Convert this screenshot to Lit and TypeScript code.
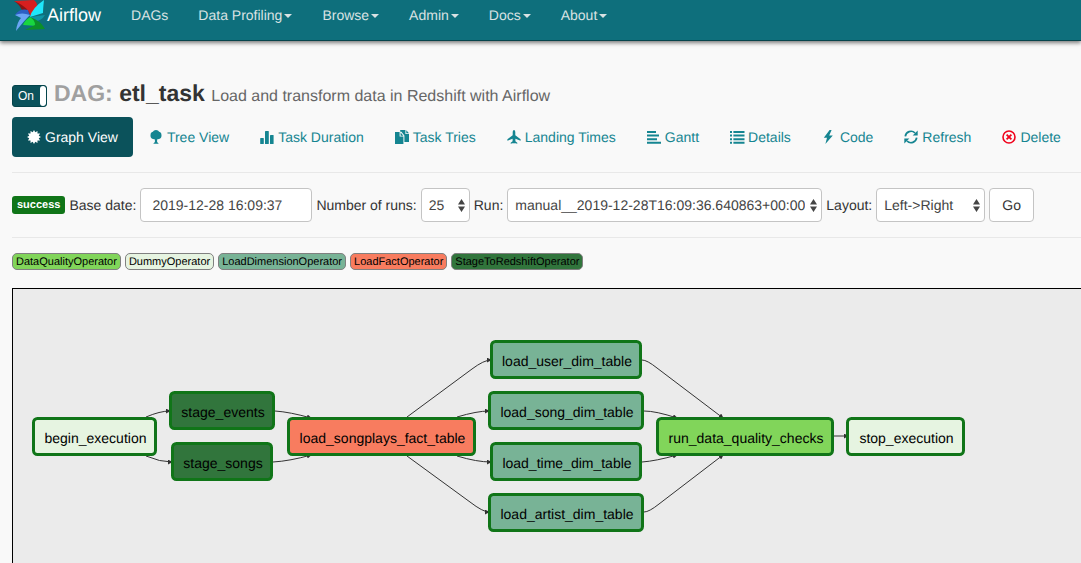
import { LitElement, html, svg, css } from "lit";
import { customElement } from "lit/decorators.js";

const star = (() => {
  const pts: string[] = [];
  for (let i = 0; i < 24; i++) {
    const r = i % 2 ? 4.9 : 7;
    const a = (i * Math.PI) / 12;
    pts.push(`${(7 + r * Math.sin(a)).toFixed(2)},${(7 - r * Math.cos(a)).toFixed(2)}`);
  }
  return pts.join(" ");
})();

const icons: Record<string, unknown> = {
  certificate: svg`<polygon points=${star}/>`,
  tree: svg`<path d="M7 0 C8.4 0 9.6 0.7 10 1.8 C11.4 2 12.5 3.1 12.4 4.5 C13 6.7 11.8 8.6 10 8.9 C9 9.1 8.4 9.3 8.1 9.4 V12 L9.8 13.8 H4.2 L5.9 12 V9.4 C5.6 9.3 5 9.1 4 8.9 C2.2 8.6 1 6.7 1.6 4.5 C1.5 3.1 2.6 2 4 1.8 C4.4 0.7 5.6 0 7 0Z"/>`,
  stats: svg`<rect x="0.2" y="8" width="3.6" height="6" rx="0.6"/><rect x="5" y="1" width="3.8" height="13" rx="0.6"/><rect x="10" y="5" width="3.6" height="9" rx="0.6"/>`,
  duplicate: svg`<path d="M0 2 H4.6 V6.6 H8.4 V14 H0Z M5.6 2.6 L8.4 5.8 H5.6Z"/><path d="M5.2 0 H10.4 V4 H14 V12 H9.4 V5.6 L6.4 1.8 H5.2Z M11.3 0.3 L14 3.2 H11.3Z"/>`,
  plane: svg`<path d="M7 0 C7.8 0 8.3 1 8.3 2.4 V5.2 L13.6 9.2 V10.8 L8.4 8.8 V11.3 L10.3 12.7 V13.8 L7.5 13 L7 14 L6.5 13 L3.7 13.8 V12.7 L5.6 11.3 V8.8 L0.4 10.8 V9.2 L5.7 5.2 V2.4 C5.7 1 6.2 0 7 0Z"/>`,
  align: svg`<path d="M0 1 H9 V3 H0Z M0 4.6 H12 V6.6 H0Z M0 8.2 H10 V10.2 H0Z M0 11.8 H14 V13.8 H0Z"/>`,
  list: svg`<path d="M0 1 H2 V3 H0Z M0 4.6 H2 V6.6 H0Z M0 8.2 H2 V10.2 H0Z M0 11.8 H2 V13.8 H0Z M3.4 1 H14.5 V3 H3.4Z M3.4 4.6 H14.5 V6.6 H3.4Z M3.4 8.2 H14.5 V10.2 H3.4Z M3.4 11.8 H14.5 V13.8 H3.4Z"/>`,
  flash: svg`<path d="M7.6 0 L1.8 7.8 H5 L3.4 14 L10.8 5.4 H7.2 L9.6 0Z"/>`,
  refresh: svg`<path d="M1.3 6.3 A5.7 5.7 0 0 1 11 3" fill="none" stroke="currentColor" stroke-width="1.7"/><path d="M13.7 0.6 V5.6 H8.7Z"/><path d="M12.7 7.7 A5.7 5.7 0 0 1 3 11" fill="none" stroke="currentColor" stroke-width="1.7"/><path d="M0.3 13.4 V8.4 H5.3Z"/>`,
  remove: svg`<circle cx="7" cy="7" r="6" fill="none" stroke="currentColor" stroke-width="1.6"/><path d="M4.6 4.6 L9.4 9.4 M9.4 4.6 L4.6 9.4" fill="none" stroke="currentColor" stroke-width="1.8"/>`,
};

const icon = (name: string) =>
  html`<svg class="icon ${name}" viewBox="0 0 14 14" aria-hidden="true">${icons[name]}</svg>`;

const menu = [
  { label: "DAGs", caret: false },
  { label: "Data Profiling", caret: true },
  { label: "Browse", caret: true },
  { label: "Admin", caret: true },
  { label: "Docs", caret: true },
  { label: "About", caret: true },
];

const tabs = [
  ["certificate", "Graph View"],
  ["tree", "Tree View"],
  ["stats", "Task Duration"],
  ["duplicate", "Task Tries"],
  ["plane", "Landing Times"],
  ["align", "Gantt"],
  ["list", "Details"],
  ["flash", "Code"],
  ["refresh", "Refresh"],
  ["remove", "Delete"],
];

const operators = [
  ["quality", "DataQualityOperator"],
  ["dummy", "DummyOperator"],
  ["dimension", "LoadDimensionOperator"],
  ["fact", "LoadFactOperator"],
  ["stage", "StageToRedshiftOperator"],
];

interface TaskNode { id: string; kind: string; x: number; y: number; w: number }

const nodes: TaskNode[] = [
  { id: "begin_execution", kind: "dummy", x: 19, y: 128, w: 125 },
  { id: "stage_events", kind: "stage", x: 156, y: 102, w: 106 },
  { id: "stage_songs", kind: "stage", x: 158, y: 153, w: 102 },
  { id: "load_songplays_fact_table", kind: "fact", x: 274, y: 128, w: 189 },
  { id: "load_user_dim_table", kind: "dimension", x: 477, y: 51, w: 152 },
  { id: "load_song_dim_table", kind: "dimension", x: 475, y: 102, w: 156 },
  { id: "load_time_dim_table", kind: "dimension", x: 477, y: 153, w: 152 },
  { id: "load_artist_dim_table", kind: "dimension", x: 475, y: 204, w: 156 },
  { id: "run_data_quality_checks", kind: "quality", x: 643, y: 128, w: 178 },
  { id: "stop_execution", kind: "dummy", x: 833, y: 128, w: 119 },
];

const edges = [
  "M133 128 Q147 122 157 122",
  "M133 167 Q147 173 159 173",
  "M262 122 Q277 123 298 129",
  "M260 173 Q277 172 298 166",
  "M394 128 L459 80 Q471 71 478 71",
  "M444 128 Q464 122 476 122",
  "M444 167 Q464 173 478 173",
  "M394 167 L457 213 Q470 223 476 223",
  "M629 71 Q634 71 644 79 L710 129",
  "M631 122 Q643 122 664 129",
  "M629 173 Q643 172 664 166",
  "M631 223 Q636 223 646 215 L710 166",
  "M821 147 H835",
];

@customElement("app-root")
export class AppRoot extends LitElement {
  static styles = css`
    :host {
      display: flex;
      flex-direction: column;
      min-height: 100vh;
      background: #f9f9f9;
      color: #333;
      font: 14px/20px "Liberation Sans", Arial, sans-serif;
      text-rendering: geometricPrecision;
      overflow: hidden;
    }
    * { box-sizing: border-box; }
    a { text-decoration: none; }
    .navbar {
      display: flex;
      align-items: flex-start;
      height: 41px;
      padding-left: 14px;
      background: #0e6f7c;
      border-bottom: 1px solid #07444c;
      box-shadow: 0 2px 4px rgba(0, 0, 0, 0.5);
      white-space: nowrap;
    }
    .brand {
      display: flex;
      gap: 1px;
      padding-right: 15px;
      color: #fff;
      font-size: 18px;
      line-height: 30px;
    }
    .logo { width: 32px; height: 32px; }
    .menu, .tabs, .legend { display: flex; margin: 0; padding: 0; list-style: none; }
    .menu a {
      display: flex;
      align-items: center;
      gap: 2px;
      padding: 5px 15px;
      color: #d9e2e3;
    }
    .caret {
      border: 4px solid transparent;
      border-top-color: currentColor;
      border-bottom: 0;
      margin-top: 2px;
    }
    main {
      display: flex;
      flex-direction: column;
      flex: 1;
      padding: 39px 0 0 12px;
    }
    .heading { display: flex; align-items: center; gap: 7px; height: 30px; }
    .toggle {
      display: flex;
      justify-content: space-between;
      width: 35px;
      height: 22px;
      margin-top: 2px;
      padding: 0;
      border: 1px solid #04444b;
      border-radius: 3px;
      background: #0b525b;
      color: #fff;
      font: 12px/20px "Liberation Sans", Arial, sans-serif;
      overflow: hidden;
    }
    .toggle-text { padding-left: 5px; }
    .toggle-knob { width: 6px; height: 20px; border-radius: 3px; background: #fff; }
    h1 { margin: 0; font-size: 23px; line-height: 30px; font-weight: bold; white-space: nowrap; }
    .muted { color: #a0a0a0; }
    .description { color: #666; font-size: 16px; font-weight: normal; }
    .tabs { gap: 1px; margin-top: 7px; white-space: nowrap; }
    .tabs a {
      display: flex;
      align-items: center;
      gap: 4px;
      padding: 10px 15px;
      border-radius: 4px;
      color: #158591;
    }
    .tabs a.active { background: #0b525b; color: #fff; }
    .icon { width: 14px; height: 14px; fill: currentColor; overflow: visible; }
    .remove { color: #f0031c; }
    hr { width: 100%; margin: 0; border: 0; border-top: 1px solid #e8e8e8; }
    .tabs + hr { margin-top: 15px; }
    .filters { display: flex; align-items: center; gap: 4px; padding: 15px 0; white-space: nowrap; }
    .state {
      padding: 2px 5px;
      border-radius: 3px;
      background: #107518;
      color: #fff;
      font-size: 11px;
      line-height: 14px;
      font-weight: bold;
    }
    .control {
      height: 34px;
      border: 1px solid #c4c4c4;
      border-radius: 4px;
      background: #fff;
      color: #444;
      font: 14px/20px "Liberation Sans", Arial, sans-serif;
      text-rendering: inherit;
    }
    .date { width: 172px; padding: 6px 11px; }
    .picker { display: grid; align-items: center; justify-items: end; }
    .picker > * { grid-area: 1 / 1; }
    .picker select { appearance: none; width: 100%; padding: 0 16px 0 7px; }
    .arrows { width: 7px; height: 13px; margin-right: 5px; fill: #444; pointer-events: none; }
    .runs { width: 49px; }
    .run { width: 315px; }
    .layout { width: 109px; }
    .go { padding: 0 12px; color: #333; }
    .legend { gap: 4px; margin: 15px 0 18px; font-size: 11px; line-height: 14px; color: #000; }
    .legend li { padding: 1px 3px 0; border: 1px solid #808080; border-radius: 5px; }
    .quality { background: #81d55a; fill: #81d55a; }
    .dummy { background: #e6f4e1; fill: #e6f4e1; }
    .dimension { background: #78b396; fill: #78b396; }
    .fact { background: #f87c5f; fill: #f87c5f; }
    .stage { background: #31753c; fill: #31753c; }
    .graph {
      display: flex;
      flex: 1;
      border: solid #000;
      border-width: 1px 0 0 1px;
      background: #ebebeb;
    }
    .canvas { width: 100%; min-height: 274px; font-size: 14px; }
    .node { stroke: #107518; stroke-width: 3px; }
    .edge { fill: none; stroke: #333; stroke-width: 1px; }
    .node-label { fill: #000; text-anchor: middle; }
  `;

  private picker(id: string, value: string) {
    return html`<div class="picker ${id}">
      <select class="control" id=${id}><option>${value}</option></select>
      <svg class="arrows" viewBox="0 0 7 13" aria-hidden="true"><path d="M3.5 0 L7 5.5 H0Z M0 7.5 H7 L3.5 13Z"/></svg>
    </div>`;
  }

  render() {
    return html`
      <nav class="navbar">
        <a class="brand" href="#">
          <svg class="logo" viewBox="0 0 32 32" aria-hidden="true">
            <path fill="#8d1313" d="M0 1 Q5 4 8 10 L16 14 L14 5Z"/>
            <path fill="#d61f1f" d="M0 1 L20 0 Q25 4 22 9 L16 16 Q16 8 0 1Z"/>
            <path fill="#1fe6fa" d="M30 0 Q29 9 29 13 L16 17 Q18 8 30 0Z"/>
            <path fill="#0f95a6" d="M16 17 L31 15 Q27 22 19 21Z"/>
            <path fill="#2c5fc4" d="M1 15 Q6 8 14 10 L16 16 L9 15Z"/>
            <path fill="#6aa5f5" d="M1 15 Q8 12 16 15 Q10 21 2 31 Q3 22 7 18Z"/>
            <path fill="#18d63f" d="M16 17 Q23 20 23 26 L9 25 Q11 20 16 17Z"/>
            <path fill="#0c8f28" d="M16 17 Q26 20 31 29 L11 30 L21 25 Q21 20 16 17Z"/>
          </svg>
          <span>Airflow</span>
        </a>
        <ul class="menu">
          ${menu.map((m) => html`<li><a href="#"><span>${m.label}</span>${m.caret ? html`<span class="caret"></span>` : null}</a></li>`)}
        </ul>
      </nav>
      <main>
        <div class="heading">
          <button class="toggle" aria-pressed="true"><span class="toggle-text">On</span><span class="toggle-knob"></span></button>
          <h1><span class="muted">DAG:</span> etl_task <span class="description">Load and transform data in Redshift with Airflow</span></h1>
        </div>
        <ul class="tabs">
          ${tabs.map(([name, label], i) => html`<li><a class=${i === 0 ? "active" : ""} href="#">${icon(name)}<span>${label}</span></a></li>`)}
        </ul>
        <hr>
        <form class="filters" @submit=${(e: Event) => e.preventDefault()}>
          <span class="state">success</span>
          <label for="date">Base date:</label>
          <input class="control date" id="date" type="text" value="2019-12-28 16:09:37">
          <label for="runs">Number of runs:</label>
          ${this.picker("runs", "25")}
          <label for="run">Run:</label>
          ${this.picker("run", "manual__2019-12-28T16:09:36.640863+00:00")}
          <label for="layout">Layout:</label>
          ${this.picker("layout", "Left->Right")}
          <button class="control go">Go</button>
        </form>
        <hr>
        <ul class="legend">
          ${operators.map(([kind, label]) => html`<li class=${kind}>${label}</li>`)}
        </ul>
        <div class="graph">
          <svg class="canvas" role="img" aria-label="Task graph">
            <defs>
              <marker id="arrow" viewBox="0 0 6 6" refX="5" refY="3" markerWidth="5" markerHeight="5" markerUnits="userSpaceOnUse" orient="auto">
                <path d="M0 0 L6 3 L0 6Z" fill="#333"/>
              </marker>
            </defs>
            ${edges.map((d) => svg`<path class="edge" d=${d} marker-end="url(#arrow)"/>`)}
            ${nodes.map((n) => svg`
              <rect class="node ${n.kind}" x=${n.x + 1.5} y=${n.y + 1.5} width=${n.w - 3} height="36" rx="4"/>
              <text class="node-label" x=${n.x + n.w / 2 + 1} y=${n.y + 26}>${n.id}</text>`)}
          </svg>
        </div>
      </main>
    `;
  }
}
